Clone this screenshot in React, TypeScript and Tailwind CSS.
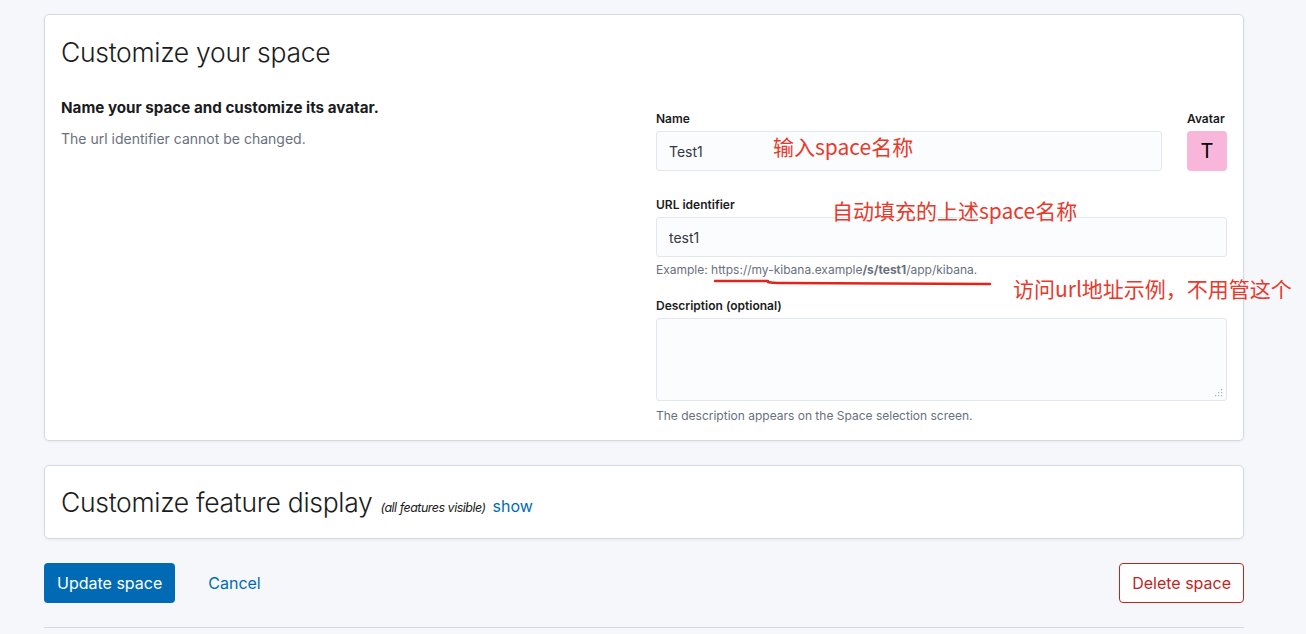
const Field = ({ label, children }: { label: string; children: React.ReactNode }) => (
  <div className="flex flex-col">
    <label className="text-[12px] leading-[17px] font-semibold text-[#1a1c21] mb-[4px]">{label}</label>
    {children}
  </div>
);

const inputCls =
  "h-[40px] w-full bg-[#fbfcfd] border border-[#e2e6ee] rounded-[3px] px-[12px] text-[14px] text-[#343741] outline-none";

const note = "absolute whitespace-nowrap text-[21px] leading-[28px] text-[#e8392c] font-['Noto_Sans_CJK_SC',sans-serif]";

export default function App() {
  return (
    <div className="min-h-screen bg-[#f5f7fa] font-['Inter',sans-serif] text-[#1a1c21]">
      <div className="relative ml-[44px] w-[1200px] pt-[14px] pb-[6px]">
        {/* customize your space */}
        <section className="bg-white border border-[#d3dae6] rounded-[5px] shadow-[0_1px_3px_rgba(0,0,0,0.06)] px-[16px] pt-[17px] pb-[15px]">
          <h2 className="text-[26.5px] leading-[40px] font-light tracking-[-0.3px]">Customize your space</h2>
          <div className="flex gap-[24px] mt-[25px]">
            <div className="flex-1">
              <h3 className="text-[15.2px] leading-[21px] font-bold">Name your space and customize its avatar.</h3>
              <p className="mt-[10px] text-[14px] leading-[21px] text-[#69707d]">The url identifier cannot be changed.</p>
            </div>
            <div className="w-[571px] pt-[13px]">
              <div className="flex gap-[25px]">
                <div className="flex-1">
                  <Field label="Name">
                    <input className={inputCls} defaultValue="Test1" />
                  </Field>
                </div>
                <Field label="Avatar">
                  <div className="w-[40px] h-[40px] rounded-[4px] bg-[#f9b6db] flex items-center justify-center text-[20px] text-black">
                    T
                  </div>
                </Field>
              </div>
              <div className="mt-[25px]">
                <Field label="URL identifier">
                  <input className={inputCls} defaultValue="test1" />
                </Field>
                <p className="mt-[4px] text-[12px] leading-[18px] text-[#69707d]">
                  Example: https://my-kibana.example<b className="font-bold">/s/test1</b>/app/kibana.
                </p>
              </div>
              <div className="mt-[18px]">
                <Field label="Description (optional)">
                  <div className="relative h-[83px] w-full bg-[#fbfcfd] border border-[#e2e6ee] rounded-[3px]">
                    <svg className="absolute right-[3px] bottom-[3px]" width="8" height="8" viewBox="0 0 8 8">
                      <g fill="#a9b0bb">
                        <rect x="6" y="0" width="1.2" height="1.2" />
                        <rect x="3" y="3" width="1.2" height="1.2" />
                        <rect x="6" y="3" width="1.2" height="1.2" />
                        <rect x="0" y="6" width="1.2" height="1.2" />
                        <rect x="3" y="6" width="1.2" height="1.2" />
                        <rect x="6" y="6" width="1.2" height="1.2" />
                      </g>
                    </svg>
                  </div>
                </Field>
                <p className="mt-[6px] text-[12px] leading-[18px] text-[#69707d]">
                  The description appears on the Space selection screen.
                </p>
              </div>
            </div>
          </div>
        </section>

        {/* feature display */}
        <section className="mt-[24px] bg-white border border-[#d3dae6] rounded-[5px] shadow-[0_1px_3px_rgba(0,0,0,0.06)] px-[16px] pt-[16px] pb-[16px]">
          <div className="flex items-baseline">
            <h2 className="text-[26.5px] leading-[40px] font-light tracking-[-0.3px]">Customize feature display</h2>
            <span className="ml-[8px] text-[12.5px] italic tracking-[-0.5px] text-[#1a1c21]">(all features visible)</span>
            <span className="ml-[7px] text-[16px] text-[#006bb4]">show</span>
          </div>
        </section>

        {/* actions */}
        <div className="mt-[24px] flex items-center">
          <button className="h-[40px] px-[13px] rounded-[4px] bg-[#006bb4] text-white text-[16px]">Update space</button>
          <button className="ml-[33px] text-[16px] text-[#006bb4]">Cancel</button>
          <button className="ml-auto h-[40px] px-[12px] rounded-[4px] border border-[#bd271e] bg-white text-[#bd271e] text-[16px]">
            Delete space
          </button>
        </div>
        <div className="mt-[24px] h-px bg-[#d3dae6]" />

        {/* annotations */}
        <span className={`${note} left-[729px] top-[132px]`}>输入space名称</span>
        <span className={`${note} left-[788px] top-[196px]`}>自动填充的上述space名称</span>
        <span className={`${note} left-[969px] top-[274px]`}>访问url地址示例，不用管这个</span>
        <svg className="absolute left-[668px] top-[276px]" width="280" height="12" viewBox="0 0 280 12">
          <path d="M3 5 L56 5 M56 6 Q60 7 70 7 L278 8" stroke="#e0261c" strokeWidth="2.4" fill="none" strokeLinecap="round" />
        </svg>
      </div>
    </div>
  );
}
